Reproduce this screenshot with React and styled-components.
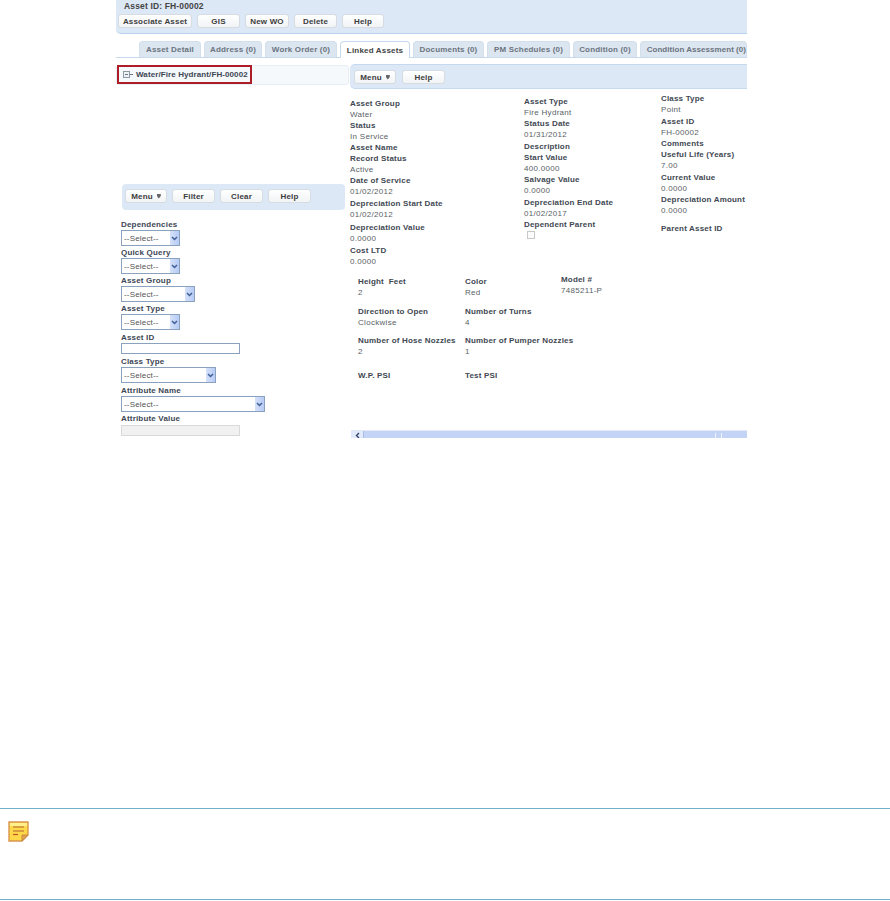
import React from "react";
import styled, { createGlobalStyle } from "styled-components";

const GlobalStyle = createGlobalStyle`
  html, body { margin: 0; padding: 0; background: #fff; }
  body { font-family: "Liberation Sans", Arial, sans-serif; }
`;

const Page = styled.div`
  width: 890px;
  height: 901px;
  overflow: hidden;
  display: flex;
  flex-direction: column;
`;

const Shot = styled.div`
  width: 631px;
  height: 438px;
  margin-left: 116px;
  overflow: hidden;
  display: flex;
  flex-direction: column;
  font-size: 8px;
  letter-spacing: 0.18px;
  color: #333;
`;

const Header = styled.div`
  height: 34px;
  flex: none;
  background: #dce8f5;
  border-bottom: 1px solid #b9d2ee;
  border-bottom-left-radius: 5px;
  padding: 1px 0 0 2px;
  box-sizing: border-box;
`;

const Title = styled.div`
  font-size: 8.5px;
  font-weight: 700;
  letter-spacing: 0.15px;
  line-height: 10px;
  color: #444;
  margin-left: 6px;
`;

const Toolbar = styled.div`
  display: flex;
  gap: ${(p) => p.$gap || 5}px;
  margin-top: ${(p) => p.$top || 0}px;
`;

const Button = styled.div`
  width: ${(p) => p.$w}px;
  height: 14px;
  box-sizing: border-box;
  display: flex;
  align-items: center;
  justify-content: center;
  gap: 4px;
  background: linear-gradient(#ffffff, #f1f3f5);
  border: 1px solid #d6dce2;
  border-radius: 3px;
  font-weight: 700;
  color: #3d3d3d;
`;

const Caret = styled.span`
  width: 4px;
  height: 5px;
  background: #666;
  clip-path: polygon(0 0, 100% 0, 100% 50%, 50% 100%, 0 50%);
`;

const TabBar = styled.div`
  height: 16px;
  margin-top: 7px;
  flex: none;
  display: flex;
  gap: 3px;
  padding-left: 23px;
  border-bottom: 1px solid #c6d9ef;
`;

const Tab = styled.div`
  width: ${(p) => p.$w}px;
  flex: none;
  box-sizing: border-box;
  height: ${(p) => (p.$active ? 17 : 16)}px;
  display: flex;
  align-items: center;
  justify-content: ${(p) => (p.$tight ? "flex-end" : "center")};
  white-space: nowrap;
  letter-spacing: ${(p) => (p.$tight ? "0.04px" : "inherit")};
  border: 1px solid ${(p) => (p.$active ? "#c6d9ef" : "#d3dfeb")};
  border-bottom: none;
  border-radius: 4px 4px 0 0;
  background: ${(p) => (p.$active ? "#fff" : "#dce6f0")};
  color: ${(p) => (p.$active ? "#444" : "#6b7480")};
  font-weight: 700;
`;

const Body = styled.div`
  display: flex;
  flex: 1;
  min-height: 0;
`;

const LeftCol = styled.div`
  width: 234px;
  flex: none;
`;

const TreePanel = styled.div`
  margin-top: 7px;
  height: 20px;
  width: 233px;
  box-sizing: border-box;
  background: #f6f9fc;
  border: 1px solid #e6eef6;
  border-radius: 3px;
`;

const TreeNode = styled.div`
  width: 135px;
  height: 19px;
  margin: -1px 0 0 0;
  box-sizing: border-box;
  border: 2px solid #ae1c28;
  display: flex;
  align-items: center;
  gap: 3px;
  padding-left: 4px;
  font-weight: 700;
  letter-spacing: 0.1px;
  color: #3c4654;
`;

const FilterBar = styled.div`
  margin: 99px 0 0 6px;
  width: 223px;
  height: 26px;
  box-sizing: border-box;
  background: #dce8f5;
  border-radius: 4px;
  padding: 5px 0 0 3px;
`;

const FilterForm = styled.div`
  margin: 9px 0 0 5px;
  display: flex;
  flex-direction: column;
  align-items: flex-start;
`;

const FormLabel = styled.div`
  font-weight: 700;
  line-height: 12px;
  height: 10px;
  margin-top: ${(p) => p.$top || 0}px;
  color: #3c4654;
`;

const Select = styled.div`
  width: ${(p) => p.$w}px;
  height: 16px;
  margin-top: 1px;
  box-sizing: border-box;
  display: flex;
  align-items: center;
  justify-content: space-between;
  border: 1px solid #8aa2bd;
  padding-left: 2px;
  color: #555;
  background: #fff;
`;

const SelectArrow = styled.span`
  width: 9px;
  height: 14px;
  display: flex;
  align-items: center;
  justify-content: center;
  background: linear-gradient(90deg, #d5e1fa, #b7cbf5);
`;

const TextBox = styled.div`
  width: 119px;
  height: 11px;
  margin-top: ${(p) => (p.$disabled ? 2 : 1)}px;
  box-sizing: border-box;
  border: 1px solid ${(p) => (p.$disabled ? "#d9d9d9" : "#8aa2bd")};
  background: ${(p) => (p.$disabled ? "#f1f1f1" : "#fff")};
`;

const RightCol = styled.div`
  flex: 1;
  min-width: 0;
`;

const RightBar = styled.div`
  margin-top: 6px;
  height: 25px;
  box-sizing: border-box;
  background: #dce8f5;
  border-top: 1px solid #c6d9ef;
  border-bottom: 1px solid #c6d9ef;
  border-top-left-radius: 5px;
  border-bottom-left-radius: 5px;
  padding: 5px 0 0 4px;
`;

const Details = styled.div`
  display: flex;
  height: 167px;
`;

const DetailCol = styled.div`
  width: ${(p) => p.$w}px;
  flex: none;
  padding-top: ${(p) => p.$top}px;
`;

const Label = styled.div`
  font-weight: 700;
  line-height: 11px;
  height: 11px;
  color: #414852;
  white-space: nowrap;
  margin-top: ${(p) => p.$top || 0}px;
`;

const Value = styled.div`
  line-height: 11px;
  height: 11px;
  color: #5a5f66;
  letter-spacing: 0.3px;
  white-space: nowrap;
`;

const Check = styled.div`
  width: 6px;
  height: 6px;
  margin: 1px 0 0 3px;
  border: 1px solid #c8c8c8;
  background: #fbfbfb;
`;

const AttrGrid = styled.div`
  display: grid;
  grid-template-columns: 107px 96px 1fr;
  grid-template-rows: 30px 29px 35px 20px;
  padding: 20px 0 0 8px;
  height: 174px;
  box-sizing: border-box;
`;

const AttrCell = styled.div`
  margin-top: ${(p) => p.$top || 0}px;
`;

const ScrollTrack = styled.div`
  height: 10px;
  margin-left: 1px;
  display: flex;
  align-items: center;
  background: #c3d4f6;
  border-top: 1px solid #e4e9f3;
  box-sizing: border-box;
`;

const ScrollLeft = styled.div`
  width: 13px;
  height: 100%;
  flex: none;
  display: flex;
  align-items: center;
  justify-content: center;
  background: #e2eafb;
  border-right: 1px solid #a9bfe8;
  box-sizing: border-box;
`;

const ScrollGrip = styled.div`
  margin-left: auto;
  margin-right: 25px;
  width: 5px;
  height: 5px;
  border-left: 1px solid #eef3fd;
  border-right: 1px solid #eef3fd;
`;

const Note = styled.div`
  margin-top: 370px;
  height: 92px;
  flex: none;
  box-sizing: border-box;
  border-top: 1px solid #72afc8;
  border-bottom: 1px solid #72afc8;
  padding: 12px 0 0 8px;
`;

const NoteIcon = () => (
  <svg width="21" height="21" viewBox="0 0 21 21">
    <path d="M1 1H20V14L14 20H1Z" fill="#ffd84a" stroke="#d9954f" strokeWidth="1.4" />
    <rect x="2" y="2" width="17" height="3" fill="#fff08a" />
    <path d="M5 6H16M5 10H16" stroke="#c98a3a" strokeWidth="1.4" />
    <path d="M5 13.5H10" stroke="#c9502a" strokeWidth="1.2" />
    <path d="M14 20V14H20Z" fill="#dca35a" stroke="#c98a3a" />
  </svg>
);

const Chevron = () => (
  <svg width="7" height="5" viewBox="0 0 7 5">
    <path d="M1 1L3.5 3.5L6 1" fill="none" stroke="#3f5f96" strokeWidth="1.5" />
  </svg>
);

const TreeIcon = () => (
  <svg width="10" height="8" viewBox="0 0 10 8">
    <rect x="0.5" y="0.5" width="6" height="6" fill="#eef1f5" stroke="#8e99a8" />
    <path d="M2 3.5H5M7 3.5H10" stroke="#6d7887" />
  </svg>
);

const tabs = [
  ["Asset Detail", 62],
  ["Address (0)", 58],
  ["Work Order (0)", 72],
  ["Linked Assets", 70],
  ["Documents (0)", 71],
  ["PM Schedules (0)", 83],
  ["Condition (0)", 64],
  ["Condition Assessment (0)", 107],
];

const filters = [
  { label: "Dependencies", w: 59, top: 0 },
  { label: "Quick Query", w: 59, top: 1 },
  { label: "Asset Group", w: 74, top: 1 },
  { label: "Asset Type", w: 59, top: 1 },
  { label: "Asset ID", box: true, top: 2 },
  { label: "Class Type", w: 95, top: 2 },
  { label: "Attribute Name", w: 144, top: 2 },
  { label: "Attribute Value", box: true, disabled: true, top: 1 },
];

const detailCols = [
  {
    w: 174,
    top: 9,
    rows: [
      ["Asset Group", "Water"],
      ["Status", "In Service"],
      ["Asset Name"],
      ["Record Status", "Active"],
      ["Date of Service", "01/02/2012"],
      ["Depreciation Start Date", "01/02/2012", 1],
      ["Depreciation Value", "0.0000", 2],
      ["Cost LTD", "0.0000", 1],
    ],
  },
  {
    w: 137,
    top: 7,
    rows: [
      ["Asset Type", "Fire Hydrant"],
      ["Status Date", "01/31/2012"],
      ["Description", null, 1],
      ["Start Value", "400.0000"],
      ["Salvage Value", "0.0000"],
      ["Depreciation End Date", "01/02/2017", 1],
      ["Dependent Parent"],
    ],
  },
  {
    w: 90,
    top: 4,
    rows: [
      ["Class Type", "Point"],
      ["Asset ID", "FH-00002", 1],
      ["Comments"],
      ["Useful Life (Years)", "7.00"],
      ["Current Value", "0.0000", 1],
      ["Depreciation Amount", "0.0000"],
      ["Parent Asset ID", null, 7],
    ],
  },
];

const attrs = [
  ["Height\u00a0 Feet", "2"],
  ["Color", "Red"],
  ["Model #", "7485211-P", -2],
  ["Direction to Open", "Clockwise"],
  ["Number of Turns", "4"],
  [null, null],
  ["Number of Hose Nozzles", "2"],
  ["Number of Pumper Nozzles", "1"],
  [null, null],
  ["W.P. PSI"],
  ["Test PSI"],
];

const App = () => (
  <Page>
    <GlobalStyle />
    <Shot>
      <Header>
        <Title>Asset ID: FH-00002</Title>
        <Toolbar $top={3}>
          <Button $w={74}>Associate Asset</Button>
          <Button $w={43}>GIS</Button>
          <Button $w={44}>New WO</Button>
          <Button $w={43}>Delete</Button>
          <Button $w={42}>Help</Button>
        </Toolbar>
      </Header>
      <TabBar>
        {tabs.map(([name, w]) => (
          <Tab
            key={name}
            $w={w}
            $active={name === "Linked Assets"}
            $tight={name === "Condition Assessment (0)"}
          >
            {name}
          </Tab>
        ))}
      </TabBar>
      <Body>
        <LeftCol>
          <TreePanel>
            <TreeNode>
              <TreeIcon />
              Water/Fire Hydrant/FH-00002
            </TreeNode>
          </TreePanel>
          <FilterBar>
            <Toolbar>
              <Button $w={42}>
                Menu <Caret />
              </Button>
              <Button $w={43}>Filter</Button>
              <Button $w={43}>Clear</Button>
              <Button $w={43}>Help</Button>
            </Toolbar>
          </FilterBar>
          <FilterForm>
            {filters.map((f) => (
              <React.Fragment key={f.label}>
                <FormLabel $top={f.top}>{f.label}</FormLabel>
                {f.box ? (
                  <TextBox $disabled={f.disabled} />
                ) : (
                  <Select $w={f.w}>
                    --Select--
                    <SelectArrow>
                      <Chevron />
                    </SelectArrow>
                  </Select>
                )}
              </React.Fragment>
            ))}
          </FilterForm>
        </LeftCol>
        <RightCol>
          <RightBar>
            <Toolbar $gap={6}>
              <Button $w={42}>
                Menu <Caret />
              </Button>
              <Button $w={43}>Help</Button>
            </Toolbar>
          </RightBar>
          <Details>
            {detailCols.map((col) => (
              <DetailCol key={col.w} $w={col.w} $top={col.top}>
                {col.rows.map(([label, value, top]) => (
                  <React.Fragment key={label}>
                    <Label $top={top}>{label}</Label>
                    {value && <Value>{value}</Value>}
                  </React.Fragment>
                ))}
                {col.w === 137 && <Check />}
              </DetailCol>
            ))}
          </Details>
          <AttrGrid>
            {attrs.map(([label, value, top], i) => (
              <AttrCell key={i} $top={top}>
                {label && <Label>{label}</Label>}
                {value && <Value>{value}</Value>}
              </AttrCell>
            ))}
          </AttrGrid>
          <ScrollTrack>
            <ScrollLeft>
              <svg width="5" height="7" viewBox="0 0 5 7">
                <path d="M4 1L1.5 3.5L4 6" fill="none" stroke="#33466b" strokeWidth="1.4" />
              </svg>
            </ScrollLeft>
            <ScrollGrip />
          </ScrollTrack>
        </RightCol>
      </Body>
    </Shot>
    <Note>
      <NoteIcon />
    </Note>
  </Page>
);

export default App;
